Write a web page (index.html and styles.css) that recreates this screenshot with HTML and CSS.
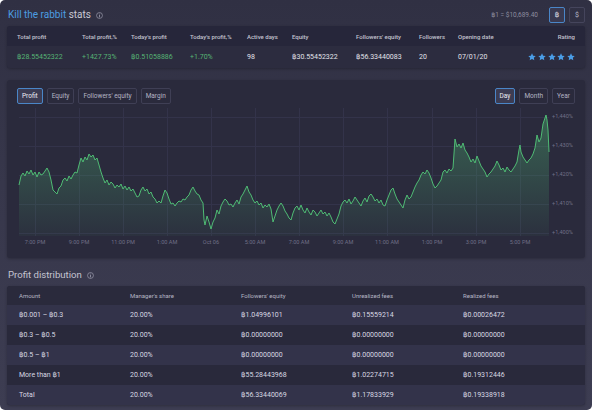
FILE: index.html
```html
<!DOCTYPE html>
<html lang="en">
<head>
<meta charset="utf-8">
<title>Kill the rabbit stats</title>
<link rel="stylesheet" href="styles.css">
</head>
<body>
<div class="page">
  <header class="top">
    <h1 class="title"><span class="accent">Kill the rabbit</span> <span>stats</span><svg class="info" viewBox="0 0 10 10" width="8" height="8"><circle cx="5" cy="5" r="4.2" fill="none" stroke="currentColor" stroke-width="1"/><circle cx="5" cy="3" r="0.7" fill="currentColor"/><rect x="4.4" y="4.3" width="1.2" height="3.4" fill="currentColor"/></svg></h1>
    <div class="rate">฿1 = $10,689.40</div>
    <div class="toggle">
      <button class="tbtn active">฿</button>
      <button class="tbtn">$</button>
    </div>
  </header>

  <section class="card stats">
    <div class="srow shead">
      <div>Total profit</div>
      <div>Total profit,%</div>
      <div>Today's profit</div>
      <div>Today's profit,%</div>
      <div>Active days</div>
      <div>Equity</div>
      <div>Followers' equity</div>
      <div>Followers</div>
      <div>Opening date</div>
      <div class="r">Rating</div>
    </div>
    <div class="srow sdata">
      <div class="pos">฿28.55452322</div>
      <div class="pos">+1427.73%</div>
      <div class="pos">฿0.51058886</div>
      <div class="pos">+1.70%</div>
      <div>98</div>
      <div>฿30.55452322</div>
      <div>฿56.33440083</div>
      <div>20</div>
      <div>07/01/20</div>
      <div class="r stars">
        <svg viewBox="0 0 10 10" width="8" height="8"><path d="M5 .4l1.45 3 3.2.4-2.35 2.2.6 3.2L5 7.6 2.1 9.2l.6-3.2L.35 3.8l3.2-.4z"/></svg>
        <svg viewBox="0 0 10 10" width="8" height="8"><path d="M5 .4l1.45 3 3.2.4-2.35 2.2.6 3.2L5 7.6 2.1 9.2l.6-3.2L.35 3.8l3.2-.4z"/></svg>
        <svg viewBox="0 0 10 10" width="8" height="8"><path d="M5 .4l1.45 3 3.2.4-2.35 2.2.6 3.2L5 7.6 2.1 9.2l.6-3.2L.35 3.8l3.2-.4z"/></svg>
        <svg viewBox="0 0 10 10" width="8" height="8"><path d="M5 .4l1.45 3 3.2.4-2.35 2.2.6 3.2L5 7.6 2.1 9.2l.6-3.2L.35 3.8l3.2-.4z"/></svg>
        <svg viewBox="0 0 10 10" width="8" height="8"><path d="M5 .4l1.45 3 3.2.4-2.35 2.2.6 3.2L5 7.6 2.1 9.2l.6-3.2L.35 3.8l3.2-.4z"/></svg>
      </div>
    </div>
  </section>

  <section class="card chart">
    <div class="toolbar">
      <div class="group">
        <button class="btn active">Profit</button>
        <button class="btn">Equity</button>
        <button class="btn">Followers' equity</button>
        <button class="btn">Margin</button>
      </div>
      <div class="group">
        <button class="btn active">Day</button>
        <button class="btn">Month</button>
        <button class="btn">Year</button>
      </div>
    </div>
    <svg class="plot" width="578" height="150" viewBox="7 108 578 150">
      <defs>
        <linearGradient id="fillg" x1="0" y1="0" x2="0" y2="1">
          <stop offset="0" stop-color="#4cb070" stop-opacity="0.42"/>
          <stop offset="1" stop-color="#4cb070" stop-opacity="0.05"/>
        </linearGradient>
      </defs>
      <g class="grid">
        <line x1="19" y1="117" x2="549" y2="117"/>
        <line x1="19" y1="146" x2="549" y2="146"/>
        <line x1="19" y1="175" x2="549" y2="175"/>
        <line x1="19" y1="204" x2="549" y2="204"/>
        <line x1="19" y1="233" x2="549" y2="233"/>
        <line x1="35" y1="108" x2="35" y2="236"/>
        <line x1="79" y1="108" x2="79" y2="236"/>
        <line x1="123" y1="108" x2="123" y2="236"/>
        <line x1="167" y1="108" x2="167" y2="236"/>
        <line x1="211" y1="108" x2="211" y2="236"/>
        <line x1="255" y1="108" x2="255" y2="236"/>
        <line x1="299" y1="108" x2="299" y2="236"/>
        <line x1="343" y1="108" x2="343" y2="236"/>
        <line x1="387" y1="108" x2="387" y2="236"/>
        <line x1="432" y1="108" x2="432" y2="236"/>
        <line x1="476" y1="108" x2="476" y2="236"/>
        <line x1="520" y1="108" x2="520" y2="236"/>
      </g>
      <polygon class="area" fill="url(#fillg)" points="19,236 19,185 21,176 23,173 25,176 27,171 29,174 31,170 33,175 35,172 37,177 39,172 41,175 43,174 45,171 47,168 49,172 51,180 53,190 55,192 57,194 59,188 61,186 63,180 65,178 67,181 69,176 71,179 73,175 75,172 77,173 79,165 81,158 83,162 85,157 87,160 89,154 91,157 93,155 95,160 97,158 99,165 101,172 103,178 105,183 107,180 109,185 111,182 113,184 115,188 117,185 119,187 121,184 123,189 125,186 127,190 129,187 131,191 133,189 135,193 137,197 139,196 141,190 143,187 145,191 147,189 149,194 151,192 153,197 155,199 157,203 159,201 161,203 163,196 165,190 167,193 169,199 171,204 173,203 175,206 177,203 179,201 181,202 183,199 185,200 187,197 189,195 191,190 193,187 195,191 197,194 199,195 201,200 203,203 204,220 205,225 207,216 209,222 211,229 213,222 215,218 217,210 219,214 221,206 223,202 225,199 227,201 229,205 231,204 233,207 235,203 237,200 239,204 241,197 243,194 245,190 247,186 249,192 251,195 253,200 255,203 257,201 259,205 261,203 263,208 265,205 267,207 269,204 271,209 273,222 275,216 277,210 279,206 281,203 283,206 285,211 287,214 289,218 291,220 293,213 295,208 297,206 299,210 301,205 303,210 305,213 307,208 309,212 311,215 313,210 315,212 317,216 319,213 321,210 323,214 325,212 327,216 329,213 331,217 333,222 335,224 337,219 339,214 341,206 343,202 345,200 347,203 349,199 351,204 353,201 355,197 357,200 359,203 361,206 363,201 365,198 367,202 369,196 371,194 373,197 375,201 377,199 379,203 381,200 383,205 385,206 387,200 389,195 391,190 393,188 395,194 397,199 399,202 401,205 403,208 405,200 407,195 409,199 411,197 413,192 415,187 417,183 419,180 421,175 423,172 425,174 427,170 429,173 431,178 433,184 435,188 437,186 439,183 441,180 443,172 445,170 447,173 449,169 451,171 453,168 455,139 457,147 459,144 461,148 463,143 465,150 467,153 469,157 471,162 473,159 475,163 477,156 479,161 481,166 483,169 485,172 487,177 489,174 491,172 493,169 495,166 497,161 499,165 501,170 503,168 505,172 507,167 509,170 511,172 513,169 515,166 517,162 519,150 520,145 521,152 523,157 525,160 527,163 529,160 531,158 533,154 535,148 537,135 539,142 541,138 543,124 545,118 546,115 547,120 548,130 549,152 549,236"/>
      <polyline class="line" points="19,185 21,176 23,173 25,176 27,171 29,174 31,170 33,175 35,172 37,177 39,172 41,175 43,174 45,171 47,168 49,172 51,180 53,190 55,192 57,194 59,188 61,186 63,180 65,178 67,181 69,176 71,179 73,175 75,172 77,173 79,165 81,158 83,162 85,157 87,160 89,154 91,157 93,155 95,160 97,158 99,165 101,172 103,178 105,183 107,180 109,185 111,182 113,184 115,188 117,185 119,187 121,184 123,189 125,186 127,190 129,187 131,191 133,189 135,193 137,197 139,196 141,190 143,187 145,191 147,189 149,194 151,192 153,197 155,199 157,203 159,201 161,203 163,196 165,190 167,193 169,199 171,204 173,203 175,206 177,203 179,201 181,202 183,199 185,200 187,197 189,195 191,190 193,187 195,191 197,194 199,195 201,200 203,203 204,220 205,225 207,216 209,222 211,229 213,222 215,218 217,210 219,214 221,206 223,202 225,199 227,201 229,205 231,204 233,207 235,203 237,200 239,204 241,197 243,194 245,190 247,186 249,192 251,195 253,200 255,203 257,201 259,205 261,203 263,208 265,205 267,207 269,204 271,209 273,222 275,216 277,210 279,206 281,203 283,206 285,211 287,214 289,218 291,220 293,213 295,208 297,206 299,210 301,205 303,210 305,213 307,208 309,212 311,215 313,210 315,212 317,216 319,213 321,210 323,214 325,212 327,216 329,213 331,217 333,222 335,224 337,219 339,214 341,206 343,202 345,200 347,203 349,199 351,204 353,201 355,197 357,200 359,203 361,206 363,201 365,198 367,202 369,196 371,194 373,197 375,201 377,199 379,203 381,200 383,205 385,206 387,200 389,195 391,190 393,188 395,194 397,199 399,202 401,205 403,208 405,200 407,195 409,199 411,197 413,192 415,187 417,183 419,180 421,175 423,172 425,174 427,170 429,173 431,178 433,184 435,188 437,186 439,183 441,180 443,172 445,170 447,173 449,169 451,171 453,168 455,139 457,147 459,144 461,148 463,143 465,150 467,153 469,157 471,162 473,159 475,163 477,156 479,161 481,166 483,169 485,172 487,177 489,174 491,172 493,169 495,166 497,161 499,165 501,170 503,168 505,172 507,167 509,170 511,172 513,169 515,166 517,162 519,150 520,145 521,152 523,157 525,160 527,163 529,160 531,158 533,154 535,148 537,135 539,142 541,138 543,124 545,118 546,115 547,120 548,130 549,152"/>
      <g class="ylab">
        <text x="552" y="117">+1,440%</text>
        <text x="552" y="146">+1,430%</text>
        <text x="552" y="175">+1,420%</text>
        <text x="552" y="204">+1,410%</text>
        <text x="552" y="233">+1,400%</text>
      </g>
      <g class="xlab">
        <text x="35" y="243">7:00 PM</text>
        <text x="79" y="243">9:00 PM</text>
        <text x="123" y="243">11:00 PM</text>
        <text x="167" y="243">1:00 AM</text>
        <text x="211" y="243">Oct 06</text>
        <text x="255" y="243">5:00 AM</text>
        <text x="299" y="243">7:00 AM</text>
        <text x="343" y="243">9:00 AM</text>
        <text x="387" y="243">11:00 AM</text>
        <text x="432" y="243">1:00 PM</text>
        <text x="476" y="243">3:00 PM</text>
        <text x="520" y="243">5:00 PM</text>
      </g>
    </svg>
  </section>

  <h2 class="section"><span>Profit distribution</span><svg class="info" viewBox="0 0 10 10" width="8" height="8"><circle cx="5" cy="5" r="4.2" fill="none" stroke="currentColor" stroke-width="1"/><circle cx="5" cy="3" r="0.7" fill="currentColor"/><rect x="4.4" y="4.3" width="1.2" height="3.4" fill="currentColor"/></svg></h2>

  <section class="card dist">
    <div class="drow dhead">
      <div>Amount</div><div>Manager's share</div><div>Followers' equity</div><div>Unrealized fees</div><div>Realized fees</div>
    </div>
    <div class="drow light">
      <div>฿0.001 – ฿0.3</div><div>20.00%</div><div>฿1.04996101</div><div>฿0.15559214</div><div>฿0.00026472</div>
    </div>
    <div class="drow">
      <div>฿0.3 – ฿0.5</div><div>20.00%</div><div>฿0.00000000</div><div>฿0.00000000</div><div>฿0.00000000</div>
    </div>
    <div class="drow light">
      <div>฿0.5 – ฿1</div><div>20.00%</div><div>฿0.00000000</div><div>฿0.00000000</div><div>฿0.00000000</div>
    </div>
    <div class="drow">
      <div>More than ฿1</div><div>20.00%</div><div>฿55.28443968</div><div>฿1.02274715</div><div>฿0.19312446</div>
    </div>
    <div class="drow light">
      <div>Total</div><div>20.00%</div><div>฿56.33440069</div><div>฿1.17833929</div><div>฿0.19338918</div>
    </div>
  </section>
</div>
</body>
</html>
```

FILE: styles.css
```css
* { box-sizing: border-box; }

html, body {
  margin: 0;
  background: #ffffff;
}

body {
  font-family: Roboto, "Noto Sans", "DejaVu Sans", sans-serif;
  color: #d6d6e0;
}

.page {
  width: 592px;
  height: 410px;
  padding: 0 7px;
  border-radius: 5px;
  overflow: hidden;
  background: linear-gradient(180deg, #303043 0%, #37374b 45%, #3d3d52 100%);
}

/* ---------- top bar ---------- */
.top {
  height: 26px;
  padding-top: 4px;
  display: flex;
  align-items: center;
}

.title {
  margin: 0 0 0 1px;
  font-size: 10px;
  line-height: 14px;
  font-weight: 400;
  color: #c9c9d4;
  white-space: nowrap;
}

.accent { color: #4c9de2; }

.info {
  color: #9c9cae;
  width: 7px;
  height: 7px;
  margin-left: 5px;
  vertical-align: -0.5px;
}

.rate {
  margin-left: auto;
  margin-right: 11px;
  font-size: 6.5px;
  color: #8d8d9f;
}

.toggle {
  display: flex;
  gap: 4px;
}

.tbtn {
  width: 16px;
  height: 16px;
  padding: 0;
  border: 1px solid #45455c;
  border-radius: 2px;
  background: transparent;
  color: #b9b9c8;
  font-family: inherit;
  font-size: 7px;
  line-height: 14px;
}

.tbtn.active {
  border-color: #4a86c8;
  background: #3a3a51;
  color: #e0e0ea;
}

/* ---------- cards ---------- */
.card {
  background: #2a2a3c;
  border-radius: 3px;
  overflow: hidden;
  box-shadow: 0 1px 3px rgba(0, 0, 0, 0.25);
}

/* ---------- stats ---------- */
.srow {
  display: grid;
  grid-template-columns: 65px 49px 59px 57px 45px 64px 63px 39px 60px 1fr;
  padding: 0 10px;
  align-items: center;
}

.shead {
  height: 20px;
  background: #26263a;
  font-size: 6px;
  font-weight: 500;
  color: #c3c3cf;
}

.sdata {
  height: 22px;
  background: #2c2c3f;
  font-size: 7px;
  color: #e2e2ea;
}

.srow .r { text-align: right; }

.pos { color: #56b374; }

.stars {
  display: flex;
  justify-content: flex-end;
  gap: 1.7px;
}

.stars svg { fill: #4a9de6; }

/* ---------- chart ---------- */
.chart {
  margin-top: 12px;
  height: 178px;
}

.toolbar {
  display: flex;
  justify-content: space-between;
  padding: 8px 10px 4px;
  height: 28px;
}

.group {
  display: flex;
  gap: 4px;
}

.btn {
  height: 16px;
  padding: 0 4px;
  border: 1px solid #3f3f55;
  border-radius: 2px;
  background: transparent;
  color: #b4b4c4;
  font-family: inherit;
  font-size: 6.5px;
  line-height: 14px;
}

.btn.active {
  border-color: #4a86c8;
  background: #3c3c53;
  color: #ececf4;
}

.plot { display: block; }

.grid line {
  stroke: #33334a;
  stroke-width: 1;
  shape-rendering: crispEdges;
}

.line {
  fill: none;
  stroke: #4fbb74;
  stroke-width: 1;
  stroke-linejoin: round;
}

.ylab text {
  font-size: 5.6px;
  fill: #6f6f86;
  dominant-baseline: middle;
}

.xlab text {
  font-size: 5.6px;
  fill: #6f6f86;
  text-anchor: middle;
  dominant-baseline: middle;
}

/* ---------- distribution ---------- */
.section {
  margin: 0 0 0 1px;
  height: 28px;
  padding-top: 10px;
  font-size: 9.6px;
  line-height: 14px;
  font-weight: 400;
  color: #c4c4d0;
  white-space: nowrap;
}

.section .info { margin-left: 5px; }

.dist { height: 119px; }

.drow {
  display: grid;
  grid-template-columns: 111px 111px 111px 111px 1fr;
  padding-left: 12px;
  height: 20px;
  align-items: center;
  font-size: 7px;
  color: #d8d8e2;
  background: #29293b;
}

.drow.light { background: #33334a; }

.dhead {
  height: 19px;
  font-size: 6px;
  color: #b6b6c4;
  background: #2a2a3c;
}
```
